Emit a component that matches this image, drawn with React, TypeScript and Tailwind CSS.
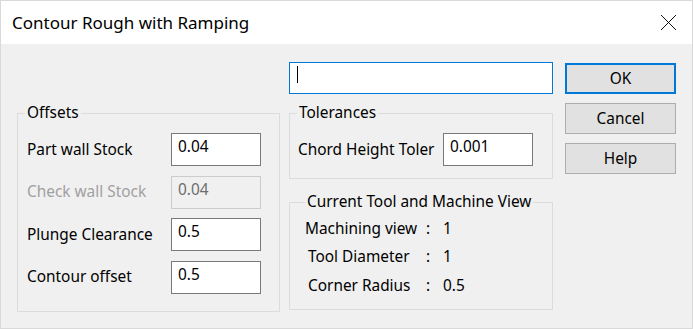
import React from "react";

const font = { fontFamily: '"Noto Sans", "Segoe UI", sans-serif' };

function GroupBox({
	title,
	className,
	legendClass,
	children,
}: {
	title: string;
	className: string;
	legendClass: string;
	children: React.ReactNode;
}) {
	return (
		<fieldset className={`border border-[#dcdcdc] ${className}`}>
			<legend className={`px-[2px] leading-[20px] ${legendClass}`}>{title}</legend>
			{children}
		</fieldset>
	);
}

function Field({ value, disabled }: { value: string; disabled?: boolean }) {
	return (
		<input
			readOnly
			value={value}
			disabled={disabled}
			className={`h-[33px] w-[90px] border px-[6px] pb-[6px] outline-none ${
				disabled
					? "border-[#cccccc] bg-[#f0f0f0] text-[#6d6d6d]"
					: "border-[#7a7a7a] bg-white text-black"
			}`}
		/>
	);
}

function Button({ label, primary }: { label: string; primary?: boolean }) {
	return (
		<button
			className={`h-[31px] w-[111px] bg-[#e1e1e1] text-black ${
				primary ? "border-2 border-[#0078d7]" : "border border-[#adadad]"
			}`}
		>
			{label}
		</button>
	);
}

export default function App() {
	const offsets = [
		{ label: "Part wall Stock", value: "0.04" },
		{ label: "Check wall Stock", value: "0.04", disabled: true },
		{ label: "Plunge Clearance", value: "0.5" },
		{ label: "Contour offset", value: "0.5" },
	];

	const toolInfo = [
		{ label: "Machining view", value: "1", pad: "pl-[15px]" },
		{ label: "Tool Diameter", value: "1", pad: "pl-[18px]" },
		{ label: "Corner Radius", value: "0.5", pad: "pl-[18px]" },
	];

	return (
		<div
			style={font}
			className="flex h-[329px] w-[693px] flex-col border border-[#d9d9d9] bg-[#f0f0f0] text-[15.4px] text-black"
		>
			<div className="flex h-[43px] items-center justify-between bg-white pl-[11px] pr-[15px]">
				<span className="text-[17px]">Contour Rough with Ramping</span>
				<svg width="17" height="17" viewBox="0 0 17 17">
					<path d="M1 1 L16 16 M16 1 L1 16" stroke="#111" strokeWidth="1" fill="none" />
				</svg>
			</div>

			<div className="flex flex-1 pl-[16px]">
				<GroupBox title="Offsets" className="mt-[59px] h-[209px] w-[263px]" legendClass="ml-[7px]">
					<div className="flex flex-col gap-[9.5px] pl-[9px] pr-[18px] pt-[10px]">
						{offsets.map((o) => (
							<div key={o.label} className="flex items-center justify-between">
								<span className={o.disabled ? "text-[#a0a0a0]" : ""}>{o.label}</span>
								<Field value={o.value} disabled={o.disabled} />
							</div>
						))}
					</div>
				</GroupBox>

				<div className="ml-[9px] flex w-[264px] flex-col">
					<div className="mt-[18px] flex h-[32px] items-start border border-[#0078d7] bg-white pl-[7px] pt-[3px]">
						<span className="h-[17px] w-px bg-black" />
					</div>

					<GroupBox title="Tolerances" className="mt-[9px] h-[76px]" legendClass="ml-[7px]">
						<div className="flex items-center justify-between pl-[8px] pr-[19px] pt-[10px]">
							<span>Chord Height Toler</span>
							<Field value="0.001" />
						</div>
					</GroupBox>

					<GroupBox
						title="Current Tool and Machine View"
						className="mt-[13px] h-[118px]"
						legendClass="ml-[15px]"
					>
						<div className="flex flex-col pt-[2px]">
							{toolInfo.map((t) => (
								<div key={t.label} className="flex h-[28.5px] items-center">
									<span className={`w-[136px] ${t.pad}`}>{t.label}</span>
									<span className="w-[17px]">:</span>
									<span>{t.value}</span>
								</div>
							))}
						</div>
					</GroupBox>
				</div>

				<div className="ml-[12px] mt-[19px] flex flex-col gap-[9px]">
					<Button label="OK" primary />
					<Button label="Cancel" />
					<Button label="Help" />
				</div>
			</div>
		</div>
	);
}
